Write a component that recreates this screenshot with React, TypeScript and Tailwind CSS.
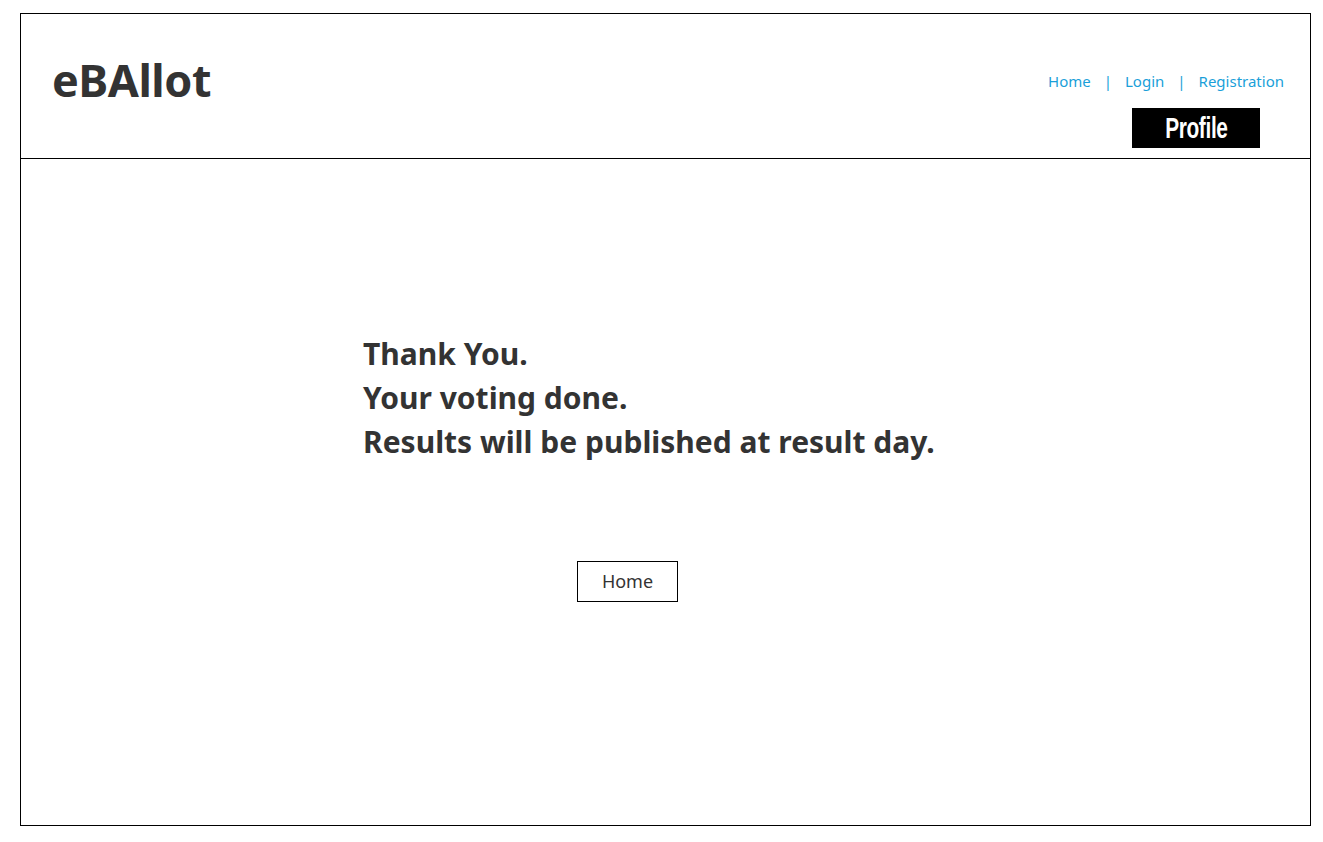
import React from "react";

const navLinks = ["Home", "Login", "Registration"];

const App = () => {
  return (
    <div className="w-[1323px] h-[842px] bg-white pt-[13px] pl-[20px] font-['Noto_Sans',sans-serif]">
      <div className="w-[1291px] h-[813px] border border-black flex flex-col">
        {/* header */}
        <div className="h-[145px] border-b border-black flex justify-between pl-[31px] pr-[26px]">
          <h1 className="mt-[38px] text-[45px] leading-[56px] font-bold text-[#333] tracking-[-0.5px]">
            eBAllot
          </h1>
          <div className="flex flex-col items-end pt-[56px]">
            <div className="flex items-center text-[15px] leading-[22px] text-[#1a9fd9]">
              {navLinks.map((link, i) => (
                <React.Fragment key={link}>
                  {i > 0 && <span className="mx-[13px]">|</span>}
                  <a href="#">{link}</a>
                </React.Fragment>
              ))}
            </div>
            <div className="mt-[16px] mr-[24px] w-[128px] h-[40px] bg-black flex items-center justify-center">
              <span className="text-white text-[29px] font-bold font-['Liberation_Sans',sans-serif] scale-x-[0.72] tracking-[-0.5px] leading-none">
                Profile
              </span>
            </div>
          </div>
        </div>

        {/* body */}
        <div className="flex-1 pl-[342px] pt-[173px]">
          <div className="text-[30px] leading-[44px] font-bold text-[#333]">
            <p>Thank You.</p>
            <p>Your voting done.</p>
            <p>Results will be published at result day.</p>
          </div>
          <button className="ml-[214px] mt-[97px] w-[101px] h-[41px] border border-black text-[18px] text-[#333]">
            Home
          </button>
        </div>
      </div>
    </div>
  );
};

export default App;
